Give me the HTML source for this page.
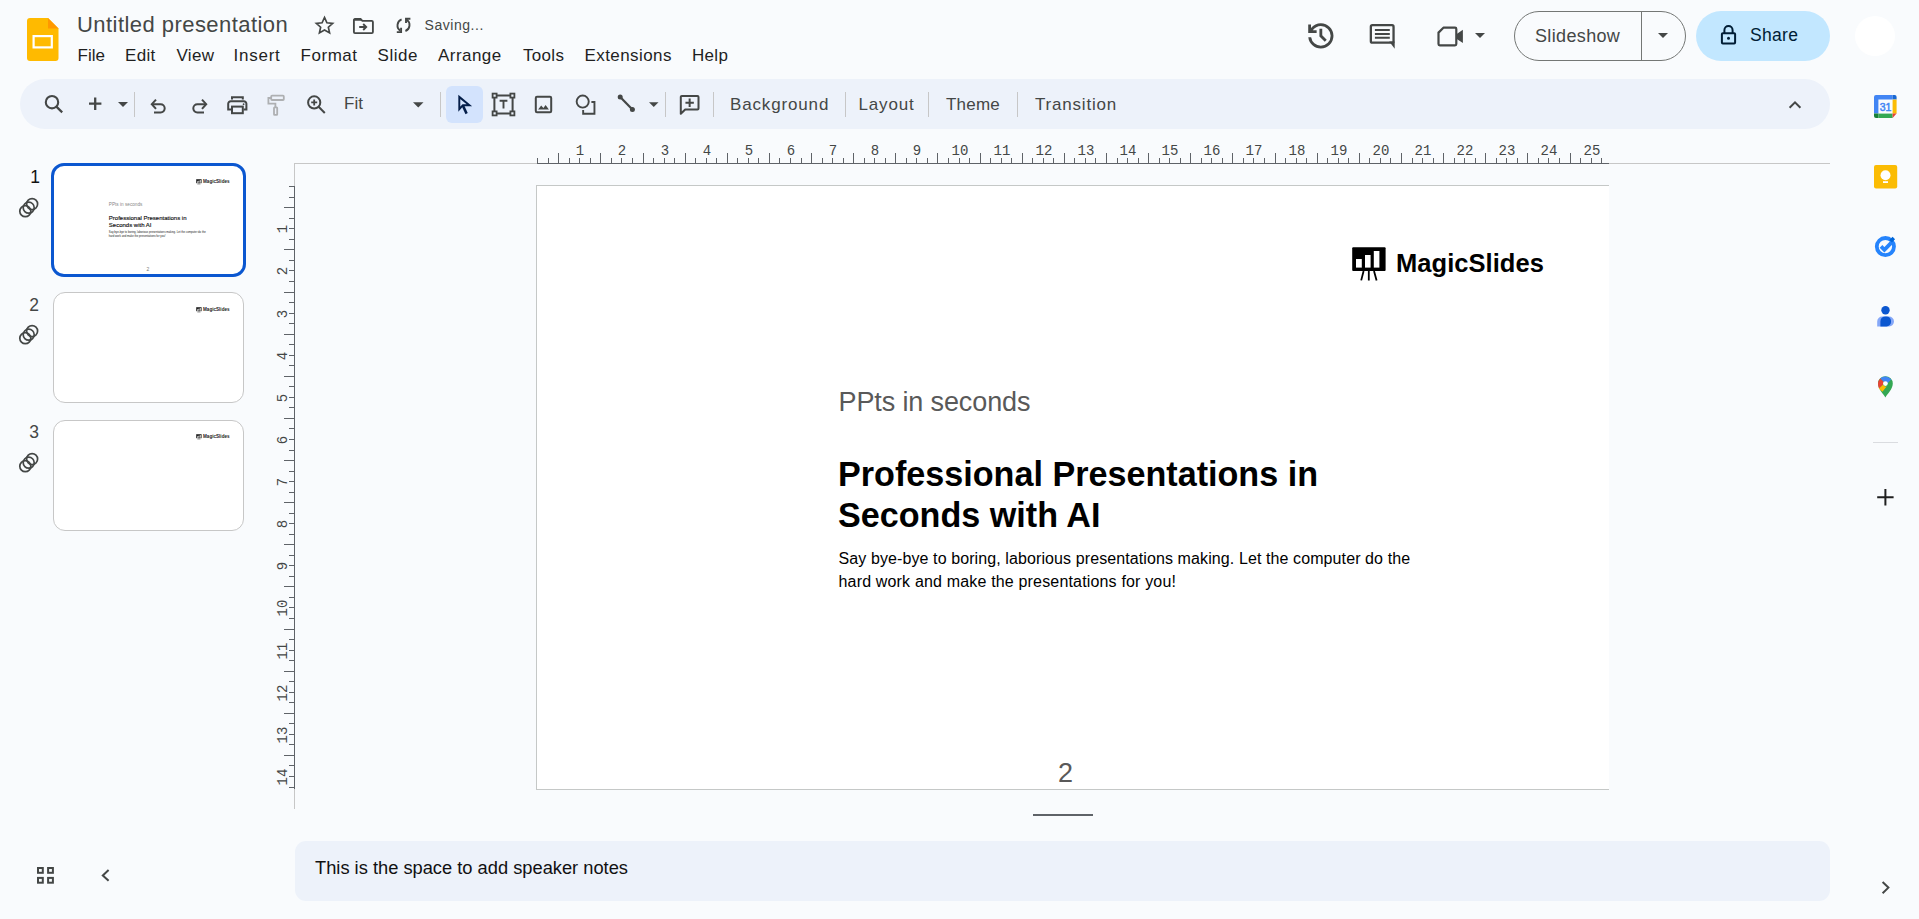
<!DOCTYPE html><html><head><meta charset="utf-8"><style>
html,body{margin:0;padding:0;width:1919px;height:919px;overflow:hidden;background:#f9fbfd;}
body{position:relative;font-family:"Liberation Sans",sans-serif;}
.t{position:absolute;white-space:nowrap;line-height:1;}
.a{position:absolute;}
svg{position:absolute;overflow:visible;}
</style></head><body>
<svg style="left:0;top:0" width="80" height="70" viewBox="0 0 80 70">
<path d="M30 18 H48 L58.5 28.5 V58 a3 3 0 0 1 -3 3 H30 a3 3 0 0 1 -3 -3 V21 a3 3 0 0 1 3 -3z" fill="#ffba00"/>
<path d="M48 18 L58.5 28.5 H48z" fill="#ff9800"/>
<rect x="33.6" y="36.1" width="18.2" height="11.3" fill="none" stroke="#fff" stroke-width="2.2"/>
</svg><div class="t" style="left:77.00px;top:13.58px;font-size:22px;color:#444746;font-weight:400;letter-spacing:0.45px;">Untitled presentation</div>
<svg style="left:313.5px;top:15px" width="21" height="21" viewBox="0 0 24 24"><path d="M12 2.8l2.75 6.05 6.6.65-4.95 4.45 1.4 6.5L12 17.1l-5.8 3.35 1.4-6.5L2.65 9.5l6.6-.65z" fill="none" stroke="#444746" stroke-width="1.9" stroke-linejoin="miter"/></svg><svg style="left:353px;top:18px" width="21" height="16" viewBox="0 0 21 16">
<path d="M1.9 1 H7.6 L9.4 2.8 H18.8 a1.1 1.1 0 0 1 1.1 1.1 V14 a1.1 1.1 0 0 1 -1.1 1.1 H2 a1.1 1.1 0 0 1 -1.1 -1.1 V2 a1 1 0 0 1 1 -1z" fill="none" stroke="#444746" stroke-width="1.85"/>
<path d="M1 1 H7.6 L9.4 2.8 H1z" fill="#444746"/>
<path d="M6.2 9 H13.2 M10.2 6 L13.2 9 L10.2 12" fill="none" stroke="#444746" stroke-width="1.85"/>
</svg><svg style="left:390px;top:12px" width="28" height="26" viewBox="0 0 28 26">
<path d="M11.6 7.4 A6.4 6.4 0 0 0 10.2 18.6" fill="none" stroke="#444746" stroke-width="1.9"/>
<path d="M6.8 20.1 H11.1 V15.8" fill="none" stroke="#444746" stroke-width="1.9"/>
<path d="M15.4 19 A6.4 6.4 0 0 0 16.8 7.8" fill="none" stroke="#444746" stroke-width="1.9"/>
<path d="M20.4 6.8 H16 V11.1" fill="none" stroke="#444746" stroke-width="1.9"/>
</svg><div class="t" style="left:424.50px;top:17.95px;font-size:14px;color:#444746;font-weight:400;letter-spacing:0.55px;">Saving...</div>
<div class="t" style="left:77.50px;top:46.51px;font-size:17px;color:#1f1f1f;font-weight:400;letter-spacing:0.0px;">File</div>
<div class="t" style="left:125.00px;top:46.51px;font-size:17px;color:#1f1f1f;font-weight:400;letter-spacing:0.3px;">Edit</div>
<div class="t" style="left:176.50px;top:46.51px;font-size:17px;color:#1f1f1f;font-weight:400;letter-spacing:0.3px;">View</div>
<div class="t" style="left:233.50px;top:46.51px;font-size:17px;color:#1f1f1f;font-weight:400;letter-spacing:0.75px;">Insert</div>
<div class="t" style="left:300.50px;top:46.51px;font-size:17px;color:#1f1f1f;font-weight:400;letter-spacing:0.55px;">Format</div>
<div class="t" style="left:377.50px;top:46.51px;font-size:17px;color:#1f1f1f;font-weight:400;letter-spacing:0.55px;">Slide</div>
<div class="t" style="left:438.00px;top:46.51px;font-size:17px;color:#1f1f1f;font-weight:400;letter-spacing:0.45px;">Arrange</div>
<div class="t" style="left:523.00px;top:46.51px;font-size:17px;color:#1f1f1f;font-weight:400;letter-spacing:0.3px;">Tools</div>
<div class="t" style="left:584.50px;top:46.51px;font-size:17px;color:#1f1f1f;font-weight:400;letter-spacing:0.42px;">Extensions</div>
<div class="t" style="left:692.00px;top:46.51px;font-size:17px;color:#1f1f1f;font-weight:400;letter-spacing:0.3px;">Help</div>
<svg style="left:1303.6px;top:18.8px" width="33.7" height="33.7" viewBox="0 -960 960 960"><path fill="#444746" d="M480-120q-138 0-240.5-91.5T122-440h82q14 104 92.5 172T480-200q117 0 198.5-81.5T760-480q0-117-81.5-198.5T480-760q-69 0-129 32t-101 88h110v80H120v-240h80v94q51-64 124.5-99T480-840q75 0 140.5 28.5t114 77q48.5 48.5 77 114T840-480q0 75-28.5 140.5t-77 114q-48.5 48.5-114 77T480-120Zm112-192L440-464v-216h80v184l128 128-56 56Z"/></svg><svg style="left:1360px;top:18px" width="40" height="36" viewBox="0 0 40 36">
<rect x="10.85" y="7.15" width="22.7" height="17.5" rx="1.5" fill="none" stroke="#444746" stroke-width="2.3"/>
<path d="M29.2 23.5 H34.7 V30.7 Z" fill="#444746"/>
<path d="M14.9 12 H29.8 M14.9 16 H29.8 M14.9 19.8 H29.8" stroke="#444746" stroke-width="2"/>
</svg><svg style="left:1435px;top:24px" width="30" height="26" viewBox="0 0 30 26">
<path d="M8.4 3.7 H20 a1.3 1.3 0 0 1 1.3 1.3 V20 a1.3 1.3 0 0 1 -1.3 1.3 H4.8 a1.3 1.3 0 0 1 -1.3 -1.3 V8.6 Z" fill="none" stroke="#444746" stroke-width="2.2" stroke-linejoin="round"/>
<path d="M21 10.4 L27.9 5.8 V19 L21 14.4 Z" fill="#444746"/>
</svg><svg style="left:1475px;top:33px" width="10" height="5" viewBox="0 0 10 5"><path d="M0 0h10L5 5z" fill="#444746"/></svg><div class="a" style="left:1514px;top:11px;width:170px;height:48px;border:1px solid #747775;border-radius:25px;"></div><div class="a" style="left:1641px;top:12px;width:1px;height:48px;background:#747775;"></div><div class="t" style="left:1535.00px;top:26.76px;font-size:18px;color:#444746;font-weight:400;letter-spacing:0.35px;">Slideshow</div>
<svg style="left:1658px;top:33px" width="10" height="5" viewBox="0 0 10 5"><path d="M0 0h10L5 5z" fill="#444746"/></svg><div class="a" style="left:1696px;top:11px;width:134px;height:50px;background:#c2e7ff;border-radius:25px;"></div><svg style="left:1720px;top:24px" width="17" height="21" viewBox="0 0 17 21">
<path d="M4.4 9 V6.2 a4.1 4.1 0 0 1 8.2 0 V9" fill="none" stroke="#001d35" stroke-width="2"/>
<rect x="1.9" y="9.2" width="13.2" height="10.2" rx="0.9" fill="none" stroke="#001d35" stroke-width="2"/>
<circle cx="8.5" cy="14.3" r="1.5" fill="#001d35"/>
</svg><div class="t" style="left:1750.00px;top:26.79px;font-size:17.5px;color:#001d35;font-weight:400;letter-spacing:0.3px;">Share</div>
<div class="a" style="left:1855px;top:16px;width:40px;height:40px;border-radius:50%;background:#fff;"></div><div class="a" style="left:20px;top:79px;width:1810px;height:50px;background:#edf2fa;border-radius:25px;"></div><svg style="left:43px;top:93px" width="22" height="22" viewBox="0 0 22 22">
<circle cx="9" cy="9.2" r="6.2" fill="none" stroke="#444746" stroke-width="2.1"/>
<path d="M13.4 13.6 L19.2 19.4" stroke="#444746" stroke-width="2.2"/></svg><svg style="left:88px;top:96px" width="15" height="15" viewBox="0 0 15 15"><path d="M7.2 1.4V14M1 7.7H13.4" stroke="#444746" stroke-width="2.3"/></svg><svg style="left:117.5px;top:102px" width="10" height="5" viewBox="0 0 10 5"><path d="M0 0h10L5 5z" fill="#444746"/></svg><div class="a" style="left:134px;top:92px;width:1px;height:25px;background:#c7c7c7;"></div><svg style="left:149px;top:96px" width="20" height="18" viewBox="0 0 20 18">
<path d="M3.5 8.2 H11.6 a4.1 4.1 0 0 1 0 8.2 H5" fill="none" stroke="#444746" stroke-width="2"/>
<path d="M7 3.6 L2.8 8.2 L7 12.8" fill="none" stroke="#444746" stroke-width="2"/></svg><svg style="left:189px;top:96px" width="20" height="18" viewBox="0 0 20 18">
<path d="M16.5 8.2 H8.4 a4.1 4.1 0 0 0 0 8.2 H15" fill="none" stroke="#444746" stroke-width="2"/>
<path d="M13 3.6 L17.2 8.2 L13 12.8" fill="none" stroke="#444746" stroke-width="2"/></svg><svg style="left:226px;top:95px" width="23" height="20" viewBox="0 0 23 20">
<path d="M6 4.6 V2.2 H16.8 V4.6" fill="none" stroke="#444746" stroke-width="2"/>
<path d="M5 14.6 H2.2 V8.8 a2.6 2.6 0 0 1 2.6 -2.6 H17.8 a2.6 2.6 0 0 1 2.6 2.6 V14.6 H17.6" fill="none" stroke="#444746" stroke-width="2"/>
<rect x="6" y="11.6" width="10.8" height="6.6" fill="none" stroke="#444746" stroke-width="2"/>
<circle cx="17.6" cy="9.2" r="0.9" fill="#444746"/></svg><svg style="left:266px;top:94px" width="20" height="24" viewBox="0 0 20 24">
<rect x="5.2" y="1.6" width="12.6" height="4.4" rx="0.8" fill="none" stroke="#aeb0b2" stroke-width="1.8"/>
<path d="M5.2 4 H2.4 V9.6 H9.4 V13" fill="none" stroke="#aeb0b2" stroke-width="1.8"/>
<rect x="8" y="13.4" width="3.2" height="7.4" rx="0.6" fill="none" stroke="#aeb0b2" stroke-width="1.8"/></svg><svg style="left:306px;top:94px" width="21" height="21" viewBox="0 0 21 21">
<circle cx="8.2" cy="8.4" r="6.1" fill="none" stroke="#444746" stroke-width="2"/>
<path d="M12.6 12.8 L18.8 19" stroke="#444746" stroke-width="2"/>
<path d="M8.2 5.4 V11.4 M5.2 8.4 H11.2" stroke="#444746" stroke-width="1.8"/></svg><div class="t" style="left:344.00px;top:95.31px;font-size:17px;color:#444746;font-weight:400;letter-spacing:0.1px;">Fit</div>
<svg style="left:413px;top:102px" width="10.5" height="5.5" viewBox="0 0 10 5"><path d="M0 0h10L5 5z" fill="#444746"/></svg><div class="a" style="left:440px;top:92px;width:1px;height:25px;background:#c7c7c7;"></div><div class="a" style="left:446px;top:86px;width:37px;height:37px;background:#d3e3fd;border-radius:6px;"></div><svg style="left:450px;top:90px" width="30" height="30" viewBox="0 0 30 30">
<path d="M9.3 6.9 V19.2 L12.9 15.2 H19.4 Z" fill="none" stroke="#041e49" stroke-width="1.95" stroke-linejoin="miter" stroke-miterlimit="10"/>
<path d="M12.8 15.4 L16.6 23.6" stroke="#041e49" stroke-width="2.5"/>
</svg><svg style="left:490px;top:91px" width="27" height="27" viewBox="0 0 27 27">
<path d="M5.5 4.4 H21.5 M5.5 22.6 H21.5 M4.4 5.5 V21.5 M22.6 5.5 V21.5" stroke="#444746" stroke-width="2"/>
<rect x="2.6" y="2.6" width="4" height="4" fill="#edf2fa" stroke="#444746" stroke-width="1.8"/>
<rect x="20.4" y="2.6" width="4" height="4" fill="#edf2fa" stroke="#444746" stroke-width="1.8"/>
<rect x="2.6" y="20.4" width="4" height="4" fill="#edf2fa" stroke="#444746" stroke-width="1.8"/>
<rect x="20.4" y="20.4" width="4" height="4" fill="#edf2fa" stroke="#444746" stroke-width="1.8"/>
<path d="M9.6 9.8 H17.4 M13.5 9.8 V17.6" stroke="#444746" stroke-width="1.9"/></svg><svg style="left:533px;top:94px" width="21" height="21" viewBox="0 0 21 21">
<rect x="2.8" y="2.8" width="15.4" height="15.4" rx="1.2" fill="none" stroke="#444746" stroke-width="2"/>
<path d="M5.1 15.6 L8.2 11.6 L10.4 13.9 L12.6 10.9 L15.9 15.6Z" fill="#444746"/></svg><svg style="left:573px;top:93px" width="25" height="24" viewBox="0 0 25 24">
<circle cx="9.7" cy="8.6" r="6.05" fill="none" stroke="#444746" stroke-width="1.9"/>
<path d="M18.4 9.05 H21.45 V20.75 H10.15 V17" fill="none" stroke="#444746" stroke-width="1.9"/></svg><svg style="left:615px;top:92px" width="22" height="23" viewBox="0 0 22 23">
<path d="M5.2 4.9 L17.4 17.6" stroke="#444746" stroke-width="2.2"/>
<circle cx="5.2" cy="4.9" r="2.5" fill="#444746"/><circle cx="17.4" cy="17.6" r="2.5" fill="#444746"/></svg><svg style="left:648.5px;top:102px" width="9.5" height="5" viewBox="0 0 10 5"><path d="M0 0h10L5 5z" fill="#444746"/></svg><div class="a" style="left:665px;top:92px;width:1px;height:25px;background:#c7c7c7;"></div><svg style="left:678px;top:93px" width="24" height="23" viewBox="0 0 24 23">
<path d="M3.8 3 H19.5 a1 1 0 0 1 1 1 V15.5 a1 1 0 0 1 -1 1 H7.2 L2.8 20.8 V4 a1 1 0 0 1 1 -1z" fill="none" stroke="#444746" stroke-width="2" stroke-linejoin="round"/>
<path d="M11.65 5.6 V14 M7.45 9.8 H15.85" stroke="#444746" stroke-width="2"/></svg><div class="a" style="left:713px;top:92px;width:1px;height:25px;background:#c7c7c7;"></div><div class="t" style="left:730.00px;top:95.91px;font-size:17px;color:#444746;font-weight:400;letter-spacing:0.85px;">Background</div>
<div class="a" style="left:845px;top:92px;width:1px;height:25px;background:#c7c7c7;"></div><div class="t" style="left:858.50px;top:95.91px;font-size:17px;color:#444746;font-weight:400;letter-spacing:0.85px;">Layout</div>
<div class="a" style="left:928px;top:92px;width:1px;height:25px;background:#c7c7c7;"></div><div class="t" style="left:946.00px;top:95.91px;font-size:17px;color:#444746;font-weight:400;letter-spacing:0.2px;">Theme</div>
<div class="a" style="left:1017px;top:92px;width:1px;height:25px;background:#c7c7c7;"></div><div class="t" style="left:1035.00px;top:95.91px;font-size:17px;color:#444746;font-weight:400;letter-spacing:0.8px;">Transition</div>
<svg style="left:1787px;top:98px" width="16" height="12" viewBox="0 0 16 12"><path d="M2.6 9.8 L8 4.4 L13.4 9.8" fill="none" stroke="#444746" stroke-width="2"/></svg><svg style="left:1873px;top:94px" width="25" height="25" viewBox="0 0 25 25">
<path d="M1 3 a2 2 0 0 1 2 -2 H19.6 V5.6 H5.4 V19.6 H1z" fill="#4285f4"/>
<path d="M19.6 1 H21.6 a2 2 0 0 1 2 2 V5.6 H19.6z" fill="#1967d2"/>
<path d="M19.6 5.6 H23.6 V19.6 H19.6z" fill="#fbbc04"/>
<path d="M5.4 19.6 H19.6 V24 H5.4z" fill="#34a853"/>
<path d="M1 19.6 H5.4 V24 H3 a2 2 0 0 1 -2 -2z" fill="#188038"/>
<path d="M19.6 19.6 H23.6 L19.6 24z" fill="#ea4335"/>
<text x="12.5" y="17.2" font-family="Liberation Sans" font-size="10.5" font-weight="400" stroke="#4285f4" stroke-width="0.5" fill="#4285f4" text-anchor="middle">31</text>
</svg><svg style="left:1873px;top:164px" width="25" height="25" viewBox="0 0 25 25">
<rect x="1" y="1" width="23.2" height="23.4" rx="2" fill="#fbbc04"/>
<circle cx="12.5" cy="11.2" r="5" fill="#fff"/>
<rect x="10" y="17.2" width="5" height="1.8" fill="#fff"/>
</svg><svg style="left:1873px;top:234px" width="25" height="25" viewBox="0 0 25 25">
<circle cx="12.4" cy="12.6" r="8.6" fill="none" stroke="#2684fc" stroke-width="3.8"/>
<path d="M8 12.4 L11.4 15.8 L18.4 8.6" fill="none" stroke="#2684fc" stroke-width="3.8"/>
<path d="M17.6 7.2 L20.8 4" stroke="#0066da" stroke-width="3.6"/>
</svg><svg style="left:1873px;top:304px" width="25" height="25" viewBox="0 0 25 25">
<circle cx="12.5" cy="6.2" r="4.2" fill="#0b57d0"/>
<path d="M4.2 22.4 V17.6 a5 5 0 0 1 5 -5 H16 a5 5 0 0 1 5 5 V17.6 a4.8 4.8 0 0 1 -4.8 4.8z" fill="#86a8f8"/>
<path d="M7.4 22.4 V17.4 a5 5 0 0 1 5 -5 H13.6 a4.4 4.4 0 0 1 4.4 4.4 V18 a4.4 4.4 0 0 1 -4.4 4.4z" fill="#0b57d0"/>
</svg><svg style="left:1873px;top:374px" width="25" height="25" viewBox="0 0 25 25">
<path d="M12.4 23.6 C10.4 20 5 15.2 5 9.6 A7.4 7.4 0 0 1 19.8 9.6 C19.8 15.2 14.4 20 12.4 23.6z" fill="#34a853"/>
<path d="M7.2 4.4 A7.4 7.4 0 0 1 18.2 5.6 L14.4 9.6 A2.4 2.4 0 0 0 10.6 8z" fill="#4285f4"/>
<path d="M7.2 4.4 L10.8 8 A2.4 2.4 0 0 0 10.2 10.6 L6 14.6 C5.4 13 5 11.4 5 9.6 A7.4 7.4 0 0 1 7.2 4.4z" fill="#ea4335"/>
<path d="M6 14.6 L10.2 10.6 A2.4 2.4 0 0 0 13.8 12.2 L9.4 17.8 C8.2 16.6 6.8 15.6 6 14.6z" fill="#fbbc04"/>
<circle cx="12.4" cy="9.6" r="2.4" fill="#fff"/>
</svg><div class="a" style="left:1873px;top:442px;width:25px;height:1px;background:#dadce0;"></div><svg style="left:1875px;top:487px" width="20" height="20" viewBox="0 0 20 20"><path d="M10.4 2V18.6 M2.2 10.3 H18.6" stroke="#1f1f1f" stroke-width="2"/></svg><div class="t" style="left:30.30px;top:168.99px;font-size:17.5px;color:#111;font-weight:400;letter-spacing:0px;">1</div>
<svg style="left:17px;top:195px" width="24" height="24" viewBox="0 0 24 24">
<circle cx="8.3" cy="16.2" r="5.5" fill="none" stroke="#444746" stroke-width="1.7"/>
<circle cx="11.7" cy="12.65" r="5.5" fill="none" stroke="#444746" stroke-width="1.7"/>
<circle cx="15.1" cy="9.1" r="5.5" fill="none" stroke="#444746" stroke-width="1.7"/></svg><div class="a" style="left:51px;top:163px;width:189px;height:108px;border:3px solid #0b57d0;border-radius:13px;background:#fff;"></div><svg style="left:196px;top:179.2px" width="6" height="7" viewBox="0 0 6 7"><rect x="0.2" y="0.2" width="5.4" height="4" fill="#222"/><rect x="1" y="2.4" width="0.9" height="1.3" fill="#fff"/><rect x="2.4" y="1.8" width="0.9" height="1.9" fill="#fff"/><rect x="3.8" y="1.1" width="0.9" height="2.6" fill="#fff"/><path d="M2.2 4.2 L1.8 5.8 M2.9 4.2 V5.8 M3.6 4.2 L4 5.8" stroke="#444" stroke-width="0.4"/></svg>
<div class="t" style="left:203px;top:180.4px;font-size:4.6px;font-weight:700;color:#222;">MagicSlides</div><div class="t" style="left:108.80px;top:203.02px;font-size:4.7px;color:#888;font-weight:400;letter-spacing:0px;">PPts in seconds</div>
<div class="t" style="left:108.80px;top:214.72px;font-size:6.0px;color:#111;font-weight:400;letter-spacing:0px;-webkit-text-stroke:0.15px #111;">Professional Presentations in</div>
<div class="t" style="left:108.80px;top:221.52px;font-size:6.0px;color:#111;font-weight:400;letter-spacing:0px;-webkit-text-stroke:0.15px #111;">Seconds with AI</div>
<div class="t" style="left:108.80px;top:232.27px;font-size:2.75px;color:#222;font-weight:400;letter-spacing:0px;">Say bye-bye to boring, laborious presentations making. Let the computer do the</div>
<div class="t" style="left:108.80px;top:236.27px;font-size:2.75px;color:#222;font-weight:400;letter-spacing:0px;">hard work and make the presentations for you!</div>
<div class="t" style="left:146.50px;top:266.77px;font-size:5px;color:#777;font-weight:400;letter-spacing:0px;">2</div>
<div class="t" style="left:29.20px;top:296.99px;font-size:17.5px;color:#444746;font-weight:400;letter-spacing:0px;">2</div>
<svg style="left:17px;top:322px" width="24" height="24" viewBox="0 0 24 24">
<circle cx="8.3" cy="16.2" r="5.5" fill="none" stroke="#444746" stroke-width="1.7"/>
<circle cx="11.7" cy="12.65" r="5.5" fill="none" stroke="#444746" stroke-width="1.7"/>
<circle cx="15.1" cy="9.1" r="5.5" fill="none" stroke="#444746" stroke-width="1.7"/></svg><div class="a" style="left:53px;top:292px;width:189px;height:109px;border:1px solid #c7c7c7;border-radius:12px;background:#fff;"></div><svg style="left:196px;top:306.7px" width="6" height="7" viewBox="0 0 6 7"><rect x="0.2" y="0.2" width="5.4" height="4" fill="#222"/><rect x="1" y="2.4" width="0.9" height="1.3" fill="#fff"/><rect x="2.4" y="1.8" width="0.9" height="1.9" fill="#fff"/><rect x="3.8" y="1.1" width="0.9" height="2.6" fill="#fff"/><path d="M2.2 4.2 L1.8 5.8 M2.9 4.2 V5.8 M3.6 4.2 L4 5.8" stroke="#444" stroke-width="0.4"/></svg>
<div class="t" style="left:203px;top:307.9px;font-size:4.6px;font-weight:700;color:#222;">MagicSlides</div><div class="t" style="left:29.20px;top:423.69px;font-size:17.5px;color:#444746;font-weight:400;letter-spacing:0px;">3</div>
<svg style="left:17px;top:450px" width="24" height="24" viewBox="0 0 24 24">
<circle cx="8.3" cy="16.2" r="5.5" fill="none" stroke="#444746" stroke-width="1.7"/>
<circle cx="11.7" cy="12.65" r="5.5" fill="none" stroke="#444746" stroke-width="1.7"/>
<circle cx="15.1" cy="9.1" r="5.5" fill="none" stroke="#444746" stroke-width="1.7"/></svg><div class="a" style="left:53px;top:420px;width:189px;height:109px;border:1px solid #c7c7c7;border-radius:12px;background:#fff;"></div><svg style="left:196px;top:434.2px" width="6" height="7" viewBox="0 0 6 7"><rect x="0.2" y="0.2" width="5.4" height="4" fill="#222"/><rect x="1" y="2.4" width="0.9" height="1.3" fill="#fff"/><rect x="2.4" y="1.8" width="0.9" height="1.9" fill="#fff"/><rect x="3.8" y="1.1" width="0.9" height="2.6" fill="#fff"/><path d="M2.2 4.2 L1.8 5.8 M2.9 4.2 V5.8 M3.6 4.2 L4 5.8" stroke="#444" stroke-width="0.4"/></svg>
<div class="t" style="left:203px;top:435.4px;font-size:4.6px;font-weight:700;color:#222;">MagicSlides</div><div class="a" style="left:294px;top:163px;width:1536px;height:1px;background:#c7c7c7;"></div><div class="a" style="left:537.0px;top:163px;width:1072.0px;height:1px;background:#5f6368;"></div><div class="a" style="left:294px;top:163px;width:1px;height:646px;background:#c7c7c7;"></div><div class="a" style="left:294px;top:186.0px;width:1px;height:603.0px;background:#5f6368;"></div><div class="a" style="left:537px;top:158px;width:1px;height:5px;background:#5f6368;"></div><div class="a" style="left:548px;top:158px;width:1px;height:5px;background:#5f6368;"></div><div class="a" style="left:558px;top:153px;width:1px;height:10px;background:#5f6368;"></div><div class="a" style="left:569px;top:158px;width:1px;height:5px;background:#5f6368;"></div><div class="a" style="left:579px;top:158px;width:1px;height:5px;background:#5f6368;"></div><div class="t" style="left:559.5px;top:144px;width:41px;text-align:center;font-family:'Liberation Mono',monospace;font-size:14px;color:#444746;">1</div><div class="a" style="left:590px;top:158px;width:1px;height:5px;background:#5f6368;"></div><div class="a" style="left:600px;top:153px;width:1px;height:10px;background:#5f6368;"></div><div class="a" style="left:611px;top:158px;width:1px;height:5px;background:#5f6368;"></div><div class="a" style="left:621px;top:158px;width:1px;height:5px;background:#5f6368;"></div><div class="t" style="left:601.5px;top:144px;width:41px;text-align:center;font-family:'Liberation Mono',monospace;font-size:14px;color:#444746;">2</div><div class="a" style="left:632px;top:158px;width:1px;height:5px;background:#5f6368;"></div><div class="a" style="left:643px;top:153px;width:1px;height:10px;background:#5f6368;"></div><div class="a" style="left:653px;top:158px;width:1px;height:5px;background:#5f6368;"></div><div class="a" style="left:664px;top:158px;width:1px;height:5px;background:#5f6368;"></div><div class="t" style="left:644.5px;top:144px;width:41px;text-align:center;font-family:'Liberation Mono',monospace;font-size:14px;color:#444746;">3</div><div class="a" style="left:674px;top:158px;width:1px;height:5px;background:#5f6368;"></div><div class="a" style="left:685px;top:153px;width:1px;height:10px;background:#5f6368;"></div><div class="a" style="left:695px;top:158px;width:1px;height:5px;background:#5f6368;"></div><div class="a" style="left:706px;top:158px;width:1px;height:5px;background:#5f6368;"></div><div class="t" style="left:686.5px;top:144px;width:41px;text-align:center;font-family:'Liberation Mono',monospace;font-size:14px;color:#444746;">4</div><div class="a" style="left:716px;top:158px;width:1px;height:5px;background:#5f6368;"></div><div class="a" style="left:727px;top:153px;width:1px;height:10px;background:#5f6368;"></div><div class="a" style="left:737px;top:158px;width:1px;height:5px;background:#5f6368;"></div><div class="a" style="left:748px;top:158px;width:1px;height:5px;background:#5f6368;"></div><div class="t" style="left:728.5px;top:144px;width:41px;text-align:center;font-family:'Liberation Mono',monospace;font-size:14px;color:#444746;">5</div><div class="a" style="left:758px;top:158px;width:1px;height:5px;background:#5f6368;"></div><div class="a" style="left:769px;top:153px;width:1px;height:10px;background:#5f6368;"></div><div class="a" style="left:779px;top:158px;width:1px;height:5px;background:#5f6368;"></div><div class="a" style="left:790px;top:158px;width:1px;height:5px;background:#5f6368;"></div><div class="t" style="left:770.5px;top:144px;width:41px;text-align:center;font-family:'Liberation Mono',monospace;font-size:14px;color:#444746;">6</div><div class="a" style="left:801px;top:158px;width:1px;height:5px;background:#5f6368;"></div><div class="a" style="left:811px;top:153px;width:1px;height:10px;background:#5f6368;"></div><div class="a" style="left:822px;top:158px;width:1px;height:5px;background:#5f6368;"></div><div class="a" style="left:832px;top:158px;width:1px;height:5px;background:#5f6368;"></div><div class="t" style="left:812.5px;top:144px;width:41px;text-align:center;font-family:'Liberation Mono',monospace;font-size:14px;color:#444746;">7</div><div class="a" style="left:843px;top:158px;width:1px;height:5px;background:#5f6368;"></div><div class="a" style="left:853px;top:153px;width:1px;height:10px;background:#5f6368;"></div><div class="a" style="left:864px;top:158px;width:1px;height:5px;background:#5f6368;"></div><div class="a" style="left:874px;top:158px;width:1px;height:5px;background:#5f6368;"></div><div class="t" style="left:854.5px;top:144px;width:41px;text-align:center;font-family:'Liberation Mono',monospace;font-size:14px;color:#444746;">8</div><div class="a" style="left:885px;top:158px;width:1px;height:5px;background:#5f6368;"></div><div class="a" style="left:895px;top:153px;width:1px;height:10px;background:#5f6368;"></div><div class="a" style="left:906px;top:158px;width:1px;height:5px;background:#5f6368;"></div><div class="a" style="left:916px;top:158px;width:1px;height:5px;background:#5f6368;"></div><div class="t" style="left:896.5px;top:144px;width:41px;text-align:center;font-family:'Liberation Mono',monospace;font-size:14px;color:#444746;">9</div><div class="a" style="left:927px;top:158px;width:1px;height:5px;background:#5f6368;"></div><div class="a" style="left:937px;top:153px;width:1px;height:10px;background:#5f6368;"></div><div class="a" style="left:948px;top:158px;width:1px;height:5px;background:#5f6368;"></div><div class="a" style="left:959px;top:158px;width:1px;height:5px;background:#5f6368;"></div><div class="t" style="left:939.5px;top:144px;width:41px;text-align:center;font-family:'Liberation Mono',monospace;font-size:14px;color:#444746;">10</div><div class="a" style="left:969px;top:158px;width:1px;height:5px;background:#5f6368;"></div><div class="a" style="left:980px;top:153px;width:1px;height:10px;background:#5f6368;"></div><div class="a" style="left:990px;top:158px;width:1px;height:5px;background:#5f6368;"></div><div class="a" style="left:1001px;top:158px;width:1px;height:5px;background:#5f6368;"></div><div class="t" style="left:981.5px;top:144px;width:41px;text-align:center;font-family:'Liberation Mono',monospace;font-size:14px;color:#444746;">11</div><div class="a" style="left:1011px;top:158px;width:1px;height:5px;background:#5f6368;"></div><div class="a" style="left:1022px;top:153px;width:1px;height:10px;background:#5f6368;"></div><div class="a" style="left:1032px;top:158px;width:1px;height:5px;background:#5f6368;"></div><div class="a" style="left:1043px;top:158px;width:1px;height:5px;background:#5f6368;"></div><div class="t" style="left:1023.5px;top:144px;width:41px;text-align:center;font-family:'Liberation Mono',monospace;font-size:14px;color:#444746;">12</div><div class="a" style="left:1053px;top:158px;width:1px;height:5px;background:#5f6368;"></div><div class="a" style="left:1064px;top:153px;width:1px;height:10px;background:#5f6368;"></div><div class="a" style="left:1074px;top:158px;width:1px;height:5px;background:#5f6368;"></div><div class="a" style="left:1085px;top:158px;width:1px;height:5px;background:#5f6368;"></div><div class="t" style="left:1065.5px;top:144px;width:41px;text-align:center;font-family:'Liberation Mono',monospace;font-size:14px;color:#444746;">13</div><div class="a" style="left:1095px;top:158px;width:1px;height:5px;background:#5f6368;"></div><div class="a" style="left:1106px;top:153px;width:1px;height:10px;background:#5f6368;"></div><div class="a" style="left:1117px;top:158px;width:1px;height:5px;background:#5f6368;"></div><div class="a" style="left:1127px;top:158px;width:1px;height:5px;background:#5f6368;"></div><div class="t" style="left:1107.5px;top:144px;width:41px;text-align:center;font-family:'Liberation Mono',monospace;font-size:14px;color:#444746;">14</div><div class="a" style="left:1138px;top:158px;width:1px;height:5px;background:#5f6368;"></div><div class="a" style="left:1148px;top:153px;width:1px;height:10px;background:#5f6368;"></div><div class="a" style="left:1159px;top:158px;width:1px;height:5px;background:#5f6368;"></div><div class="a" style="left:1169px;top:158px;width:1px;height:5px;background:#5f6368;"></div><div class="t" style="left:1149.5px;top:144px;width:41px;text-align:center;font-family:'Liberation Mono',monospace;font-size:14px;color:#444746;">15</div><div class="a" style="left:1180px;top:158px;width:1px;height:5px;background:#5f6368;"></div><div class="a" style="left:1190px;top:153px;width:1px;height:10px;background:#5f6368;"></div><div class="a" style="left:1201px;top:158px;width:1px;height:5px;background:#5f6368;"></div><div class="a" style="left:1211px;top:158px;width:1px;height:5px;background:#5f6368;"></div><div class="t" style="left:1191.5px;top:144px;width:41px;text-align:center;font-family:'Liberation Mono',monospace;font-size:14px;color:#444746;">16</div><div class="a" style="left:1222px;top:158px;width:1px;height:5px;background:#5f6368;"></div><div class="a" style="left:1232px;top:153px;width:1px;height:10px;background:#5f6368;"></div><div class="a" style="left:1243px;top:158px;width:1px;height:5px;background:#5f6368;"></div><div class="a" style="left:1253px;top:158px;width:1px;height:5px;background:#5f6368;"></div><div class="t" style="left:1233.5px;top:144px;width:41px;text-align:center;font-family:'Liberation Mono',monospace;font-size:14px;color:#444746;">17</div><div class="a" style="left:1264px;top:158px;width:1px;height:5px;background:#5f6368;"></div><div class="a" style="left:1275px;top:153px;width:1px;height:10px;background:#5f6368;"></div><div class="a" style="left:1285px;top:158px;width:1px;height:5px;background:#5f6368;"></div><div class="a" style="left:1296px;top:158px;width:1px;height:5px;background:#5f6368;"></div><div class="t" style="left:1276.5px;top:144px;width:41px;text-align:center;font-family:'Liberation Mono',monospace;font-size:14px;color:#444746;">18</div><div class="a" style="left:1306px;top:158px;width:1px;height:5px;background:#5f6368;"></div><div class="a" style="left:1317px;top:153px;width:1px;height:10px;background:#5f6368;"></div><div class="a" style="left:1327px;top:158px;width:1px;height:5px;background:#5f6368;"></div><div class="a" style="left:1338px;top:158px;width:1px;height:5px;background:#5f6368;"></div><div class="t" style="left:1318.5px;top:144px;width:41px;text-align:center;font-family:'Liberation Mono',monospace;font-size:14px;color:#444746;">19</div><div class="a" style="left:1348px;top:158px;width:1px;height:5px;background:#5f6368;"></div><div class="a" style="left:1359px;top:153px;width:1px;height:10px;background:#5f6368;"></div><div class="a" style="left:1369px;top:158px;width:1px;height:5px;background:#5f6368;"></div><div class="a" style="left:1380px;top:158px;width:1px;height:5px;background:#5f6368;"></div><div class="t" style="left:1360.5px;top:144px;width:41px;text-align:center;font-family:'Liberation Mono',monospace;font-size:14px;color:#444746;">20</div><div class="a" style="left:1390px;top:158px;width:1px;height:5px;background:#5f6368;"></div><div class="a" style="left:1401px;top:153px;width:1px;height:10px;background:#5f6368;"></div><div class="a" style="left:1412px;top:158px;width:1px;height:5px;background:#5f6368;"></div><div class="a" style="left:1422px;top:158px;width:1px;height:5px;background:#5f6368;"></div><div class="t" style="left:1402.5px;top:144px;width:41px;text-align:center;font-family:'Liberation Mono',monospace;font-size:14px;color:#444746;">21</div><div class="a" style="left:1433px;top:158px;width:1px;height:5px;background:#5f6368;"></div><div class="a" style="left:1443px;top:153px;width:1px;height:10px;background:#5f6368;"></div><div class="a" style="left:1454px;top:158px;width:1px;height:5px;background:#5f6368;"></div><div class="a" style="left:1464px;top:158px;width:1px;height:5px;background:#5f6368;"></div><div class="t" style="left:1444.5px;top:144px;width:41px;text-align:center;font-family:'Liberation Mono',monospace;font-size:14px;color:#444746;">22</div><div class="a" style="left:1475px;top:158px;width:1px;height:5px;background:#5f6368;"></div><div class="a" style="left:1485px;top:153px;width:1px;height:10px;background:#5f6368;"></div><div class="a" style="left:1496px;top:158px;width:1px;height:5px;background:#5f6368;"></div><div class="a" style="left:1506px;top:158px;width:1px;height:5px;background:#5f6368;"></div><div class="t" style="left:1486.5px;top:144px;width:41px;text-align:center;font-family:'Liberation Mono',monospace;font-size:14px;color:#444746;">23</div><div class="a" style="left:1517px;top:158px;width:1px;height:5px;background:#5f6368;"></div><div class="a" style="left:1527px;top:153px;width:1px;height:10px;background:#5f6368;"></div><div class="a" style="left:1538px;top:158px;width:1px;height:5px;background:#5f6368;"></div><div class="a" style="left:1548px;top:158px;width:1px;height:5px;background:#5f6368;"></div><div class="t" style="left:1528.5px;top:144px;width:41px;text-align:center;font-family:'Liberation Mono',monospace;font-size:14px;color:#444746;">24</div><div class="a" style="left:1559px;top:158px;width:1px;height:5px;background:#5f6368;"></div><div class="a" style="left:1570px;top:153px;width:1px;height:10px;background:#5f6368;"></div><div class="a" style="left:1580px;top:158px;width:1px;height:5px;background:#5f6368;"></div><div class="a" style="left:1591px;top:158px;width:1px;height:5px;background:#5f6368;"></div><div class="t" style="left:1571.5px;top:144px;width:41px;text-align:center;font-family:'Liberation Mono',monospace;font-size:14px;color:#444746;">25</div><div class="a" style="left:1601px;top:158px;width:1px;height:5px;background:#5f6368;"></div><div class="a" style="left:289px;top:186px;width:5px;height:1px;background:#5f6368;"></div><div class="a" style="left:289px;top:197px;width:5px;height:1px;background:#5f6368;"></div><div class="a" style="left:284px;top:207px;width:10px;height:1px;background:#5f6368;"></div><div class="a" style="left:289px;top:218px;width:5px;height:1px;background:#5f6368;"></div><div class="a" style="left:289px;top:228px;width:5px;height:1px;background:#5f6368;"></div><div class="t" style="left:262.3px;top:221.5px;width:41px;height:14px;text-align:center;font-family:'Liberation Mono',monospace;font-size:14px;color:#444746;transform:rotate(-90deg);">1</div><div class="a" style="left:289px;top:239px;width:5px;height:1px;background:#5f6368;"></div><div class="a" style="left:284px;top:249px;width:10px;height:1px;background:#5f6368;"></div><div class="a" style="left:289px;top:260px;width:5px;height:1px;background:#5f6368;"></div><div class="a" style="left:289px;top:270px;width:5px;height:1px;background:#5f6368;"></div><div class="t" style="left:262.3px;top:263.5px;width:41px;height:14px;text-align:center;font-family:'Liberation Mono',monospace;font-size:14px;color:#444746;transform:rotate(-90deg);">2</div><div class="a" style="left:289px;top:281px;width:5px;height:1px;background:#5f6368;"></div><div class="a" style="left:284px;top:292px;width:10px;height:1px;background:#5f6368;"></div><div class="a" style="left:289px;top:302px;width:5px;height:1px;background:#5f6368;"></div><div class="a" style="left:289px;top:313px;width:5px;height:1px;background:#5f6368;"></div><div class="t" style="left:262.3px;top:306.5px;width:41px;height:14px;text-align:center;font-family:'Liberation Mono',monospace;font-size:14px;color:#444746;transform:rotate(-90deg);">3</div><div class="a" style="left:289px;top:323px;width:5px;height:1px;background:#5f6368;"></div><div class="a" style="left:284px;top:334px;width:10px;height:1px;background:#5f6368;"></div><div class="a" style="left:289px;top:344px;width:5px;height:1px;background:#5f6368;"></div><div class="a" style="left:289px;top:355px;width:5px;height:1px;background:#5f6368;"></div><div class="t" style="left:262.3px;top:348.5px;width:41px;height:14px;text-align:center;font-family:'Liberation Mono',monospace;font-size:14px;color:#444746;transform:rotate(-90deg);">4</div><div class="a" style="left:289px;top:365px;width:5px;height:1px;background:#5f6368;"></div><div class="a" style="left:284px;top:376px;width:10px;height:1px;background:#5f6368;"></div><div class="a" style="left:289px;top:386px;width:5px;height:1px;background:#5f6368;"></div><div class="a" style="left:289px;top:397px;width:5px;height:1px;background:#5f6368;"></div><div class="t" style="left:262.3px;top:390.5px;width:41px;height:14px;text-align:center;font-family:'Liberation Mono',monospace;font-size:14px;color:#444746;transform:rotate(-90deg);">5</div><div class="a" style="left:289px;top:407px;width:5px;height:1px;background:#5f6368;"></div><div class="a" style="left:284px;top:418px;width:10px;height:1px;background:#5f6368;"></div><div class="a" style="left:289px;top:428px;width:5px;height:1px;background:#5f6368;"></div><div class="a" style="left:289px;top:439px;width:5px;height:1px;background:#5f6368;"></div><div class="t" style="left:262.3px;top:432.5px;width:41px;height:14px;text-align:center;font-family:'Liberation Mono',monospace;font-size:14px;color:#444746;transform:rotate(-90deg);">6</div><div class="a" style="left:289px;top:450px;width:5px;height:1px;background:#5f6368;"></div><div class="a" style="left:284px;top:460px;width:10px;height:1px;background:#5f6368;"></div><div class="a" style="left:289px;top:471px;width:5px;height:1px;background:#5f6368;"></div><div class="a" style="left:289px;top:481px;width:5px;height:1px;background:#5f6368;"></div><div class="t" style="left:262.3px;top:474.5px;width:41px;height:14px;text-align:center;font-family:'Liberation Mono',monospace;font-size:14px;color:#444746;transform:rotate(-90deg);">7</div><div class="a" style="left:289px;top:492px;width:5px;height:1px;background:#5f6368;"></div><div class="a" style="left:284px;top:502px;width:10px;height:1px;background:#5f6368;"></div><div class="a" style="left:289px;top:513px;width:5px;height:1px;background:#5f6368;"></div><div class="a" style="left:289px;top:523px;width:5px;height:1px;background:#5f6368;"></div><div class="t" style="left:262.3px;top:516.5px;width:41px;height:14px;text-align:center;font-family:'Liberation Mono',monospace;font-size:14px;color:#444746;transform:rotate(-90deg);">8</div><div class="a" style="left:289px;top:534px;width:5px;height:1px;background:#5f6368;"></div><div class="a" style="left:284px;top:544px;width:10px;height:1px;background:#5f6368;"></div><div class="a" style="left:289px;top:555px;width:5px;height:1px;background:#5f6368;"></div><div class="a" style="left:289px;top:565px;width:5px;height:1px;background:#5f6368;"></div><div class="t" style="left:262.3px;top:558.5px;width:41px;height:14px;text-align:center;font-family:'Liberation Mono',monospace;font-size:14px;color:#444746;transform:rotate(-90deg);">9</div><div class="a" style="left:289px;top:576px;width:5px;height:1px;background:#5f6368;"></div><div class="a" style="left:284px;top:586px;width:10px;height:1px;background:#5f6368;"></div><div class="a" style="left:289px;top:597px;width:5px;height:1px;background:#5f6368;"></div><div class="a" style="left:289px;top:607px;width:5px;height:1px;background:#5f6368;"></div><div class="t" style="left:262.3px;top:600.5px;width:41px;height:14px;text-align:center;font-family:'Liberation Mono',monospace;font-size:14px;color:#444746;transform:rotate(-90deg);">10</div><div class="a" style="left:289px;top:618px;width:5px;height:1px;background:#5f6368;"></div><div class="a" style="left:284px;top:629px;width:10px;height:1px;background:#5f6368;"></div><div class="a" style="left:289px;top:639px;width:5px;height:1px;background:#5f6368;"></div><div class="a" style="left:289px;top:650px;width:5px;height:1px;background:#5f6368;"></div><div class="t" style="left:262.3px;top:643.5px;width:41px;height:14px;text-align:center;font-family:'Liberation Mono',monospace;font-size:14px;color:#444746;transform:rotate(-90deg);">11</div><div class="a" style="left:289px;top:660px;width:5px;height:1px;background:#5f6368;"></div><div class="a" style="left:284px;top:671px;width:10px;height:1px;background:#5f6368;"></div><div class="a" style="left:289px;top:681px;width:5px;height:1px;background:#5f6368;"></div><div class="a" style="left:289px;top:692px;width:5px;height:1px;background:#5f6368;"></div><div class="t" style="left:262.3px;top:685.5px;width:41px;height:14px;text-align:center;font-family:'Liberation Mono',monospace;font-size:14px;color:#444746;transform:rotate(-90deg);">12</div><div class="a" style="left:289px;top:702px;width:5px;height:1px;background:#5f6368;"></div><div class="a" style="left:284px;top:713px;width:10px;height:1px;background:#5f6368;"></div><div class="a" style="left:289px;top:723px;width:5px;height:1px;background:#5f6368;"></div><div class="a" style="left:289px;top:734px;width:5px;height:1px;background:#5f6368;"></div><div class="t" style="left:262.3px;top:727.5px;width:41px;height:14px;text-align:center;font-family:'Liberation Mono',monospace;font-size:14px;color:#444746;transform:rotate(-90deg);">13</div><div class="a" style="left:289px;top:744px;width:5px;height:1px;background:#5f6368;"></div><div class="a" style="left:284px;top:755px;width:10px;height:1px;background:#5f6368;"></div><div class="a" style="left:289px;top:765px;width:5px;height:1px;background:#5f6368;"></div><div class="a" style="left:289px;top:776px;width:5px;height:1px;background:#5f6368;"></div><div class="t" style="left:262.3px;top:769.5px;width:41px;height:14px;text-align:center;font-family:'Liberation Mono',monospace;font-size:14px;color:#444746;transform:rotate(-90deg);">14</div><div class="a" style="left:289px;top:787px;width:5px;height:1px;background:#5f6368;"></div><div class="a" style="left:536px;top:185px;width:1072px;height:603px;background:#fff;border-left:1px solid #c5c8c7;border-top:1px solid #c5c8c7;border-bottom:1px solid #c5c8c7;"></div><svg style="left:1350px;top:245px" width="40" height="40" viewBox="0 0 40 40">
<rect x="2.2" y="2.2" width="33.4" height="23.8" rx="1" fill="#000"/>
<rect x="6" y="14" width="5.8" height="8.6" fill="#fff"/>
<rect x="15" y="10" width="5.6" height="12.6" fill="#fff"/>
<rect x="23.8" y="6" width="5.6" height="16.6" fill="#fff"/>
<path d="M13.6 26 L11.2 35.4 M18.8 26 V35.4 M24 26 L26.6 35.4" stroke="#000" stroke-width="1.8"/>
</svg><div class="t" style="left:1396.00px;top:250.91px;font-size:25.5px;color:#000;font-weight:700;letter-spacing:0.05px;">MagicSlides</div>
<div class="t" style="left:838.50px;top:388.94px;font-size:27px;color:#595959;font-weight:400;letter-spacing:-0.12px;">PPts in seconds</div>
<div class="t" style="left:838.00px;top:456.99px;font-size:34.15px;color:#000;font-weight:700;letter-spacing:0px;">Professional Presentations in</div>
<div class="t" style="left:838.00px;top:497.59px;font-size:34.15px;color:#000;font-weight:700;letter-spacing:0px;">Seconds with AI</div>
<div class="t" style="left:838.50px;top:550.86px;font-size:16px;color:#000;font-weight:400;letter-spacing:0.1px;">Say bye-bye to boring, laborious presentations making. Let the computer do the</div>
<div class="t" style="left:838.50px;top:574.26px;font-size:16px;color:#000;font-weight:400;letter-spacing:0.17px;">hard work and make the presentations for you!</div>
<div class="t" style="left:1058.00px;top:760.04px;font-size:27px;color:#595959;font-weight:400;letter-spacing:0px;">2</div>
<div class="a" style="left:1033px;top:814px;width:60px;height:2px;background:#5f6368;"></div><div class="a" style="left:295px;top:841px;width:1535px;height:60px;background:#edf2fa;border-radius:11px;"></div><div class="t" style="left:315.00px;top:858.51px;font-size:18.3px;color:#111;font-weight:400;letter-spacing:0px;">This is the space to add speaker notes</div>
<svg style="left:35px;top:865px" width="21" height="21" viewBox="0 0 21 21">
<rect x="3" y="3" width="4.8" height="4.8" fill="none" stroke="#444746" stroke-width="2"/>
<rect x="13.1" y="3" width="4.8" height="4.8" fill="none" stroke="#444746" stroke-width="2"/>
<rect x="3" y="12.9" width="4.8" height="4.8" fill="none" stroke="#444746" stroke-width="2"/>
<rect x="13.1" y="12.9" width="4.8" height="4.8" fill="none" stroke="#444746" stroke-width="2"/></svg><svg style="left:99px;top:867px" width="14" height="17" viewBox="0 0 14 17"><path d="M9.6 3 L3.8 8.4 L9.6 13.8" fill="none" stroke="#444746" stroke-width="2"/></svg><svg style="left:1879px;top:879px" width="14" height="17" viewBox="0 0 14 17"><path d="M3.6 3 L9.4 8.6 L3.6 14.2" fill="none" stroke="#444746" stroke-width="2"/></svg></body></html>
